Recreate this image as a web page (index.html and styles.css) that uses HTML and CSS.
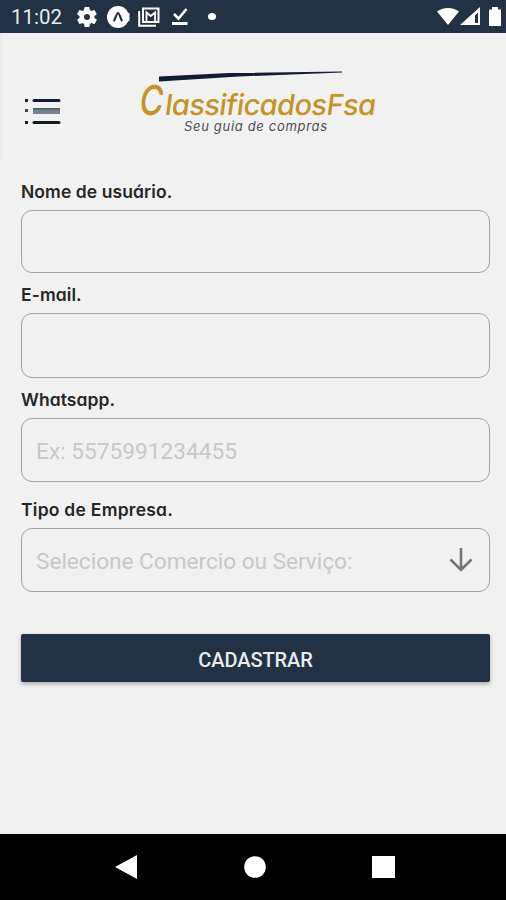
FILE: index.html
```html
<!DOCTYPE html>
<html lang="pt-BR">
<head>
    <meta charset="UTF-8">
    <meta name="viewport" content="width=device-width, initial-scale=1.0">
    <title>ClassificadosFsa</title>
    <link rel="stylesheet" href="styles.css">
</head>
<body>
<div class="status-bar">
    <span class="clock">11:02</span>
    <svg class="gear" width="20" height="20" viewBox="2 2 20 20"><path fill="#fff" d="M19.4 13a7.5 7.5 0 0 0 0-2l2.1-1.6c.2-.2.3-.4.1-.7l-2-3.4c-.1-.2-.4-.3-.6-.2l-2.5 1a7.3 7.3 0 0 0-1.7-1l-.4-2.6c0-.3-.2-.5-.5-.5h-4c-.2 0-.4.2-.5.5L9 5.100a7.300 7.300 0 0 0-1.700 1l-2.500-1c-.2-.1-.5 0-.6.2l-2 3.400c-.1.3-.1.5.1.7L4.500 11a7.500 7.500 0 0 0 0 2l-2.100 1.600c-.2.200-.3.400-.1.700l2 3.400c.1.200.4.300.6.200l2.500-1c.5.400 1.100.8 1.700 1l.4 2.600c0 .3.2.5.5.5h4c.2 0 .5-.2.5-.5l.4-2.600c.6-.2 1.200-.6 1.700-1l2.500 1c.2.1.5 0 .6-.2l2-3.400c.1-.3.1-.5-.1-.7zM12 15a3 3 0 1 1 0-6 3 3 0 0 1 0 6z"/></svg>
    <svg class="expo" width="24" height="24" viewBox="0 0 24 24"><circle cx="12" cy="12" r="11" fill="#fff"/><path fill="#fff" d="M20 8h3.500v8H20z"/><path d="M7.800 16.200C9.500 14 10.500 8 12 8s2.500 6 4.200 8.200" fill="none" stroke="#223144" stroke-width="2.200"/></svg>
    <svg class="mail" width="22" height="20" viewBox="0 0 22 20"><path d="M1.200 4v14.800H18" fill="none" stroke="#fff" stroke-width="2"/><rect x="5" y="1.500" width="15.500" height="13.500" fill="none" stroke="#fff" stroke-width="2"/><path d="M8.500 15V5.500l4.300 3.600 4.300-3.600V15" fill="none" stroke="#fff" stroke-width="1.900"/></svg>
    <svg class="check" width="18" height="20" viewBox="0 0 18 20"><path d="M3 7l4.500 4.500L15.500 2" fill="none" stroke="#fff" stroke-width="2.600"/><path fill="#fff" d="M1 15h15.500v3H1z"/></svg>
    <span class="dot"></span>
    <svg class="signals" width="66" height="22" viewBox="0 0 66 22"><path fill="#fff" d="M0 5.500C6 .8 16 .8 22 5.500L11 19z"/><path fill="#fff" fill-rule="evenodd" d="M43 1v18H23zM38 9.500V17h3V6.500z"/><path fill="#fff" d="M52 3.500h3V1h6v2.500h3V20H52z"/></svg>
</div>

<div class="header">
    <svg class="menu" width="38" height="30" viewBox="0 0 38 30">
        <path d="M1 4.500h3M1 26.500h3" stroke="#222" stroke-width="3"/>
        <path d="M1 14.500h3" stroke="#444" stroke-width="3"/>
        <path d="M10 4.500h25" stroke="#121a3b" stroke-width="3" stroke-linecap="round"/>
        <path d="M9 13h27v5H9z" fill="#75828f"/>
        <path d="M9 12.800h27" stroke="#4d5966" stroke-width="1.500"/>
        <path d="M10 26.500h25" stroke="#151a1a" stroke-width="3" stroke-linecap="round"/>
    </svg>
    <svg class="logo" width="240" height="70" viewBox="0 0 240 70">
        <path d="M20 8.500L90 5l113-1.500v1L100 8.500l-80 5z" fill="#101c31"/>
        <text class="brand" transform="translate(0 47) skewX(-8)"><tspan class="brand-cap" x="-1" y="0" textLength="24" lengthAdjust="spacingAndGlyphs">C</tspan><tspan x="25" y="0" textLength="211" lengthAdjust="spacing">lassificadosFsa</tspan></text>
        <text class="tagline" x="45" y="63" textLength="143" lengthAdjust="spacing">Seu guia de compras</text>
    </svg>
</div>

<form class="form">
    <label class="label" for="nome">Nome de usuário.</label>
    <input class="field" type="text" id="nome">
    <label class="label label-email" for="email">E-mail.</label>
    <input class="field field-email" type="text" id="email">
    <label class="label label-whats" for="whats">Whatsapp.</label>
    <input class="field field-whats" type="text" id="whats" placeholder="Ex: 5575991234455">
    <label class="label label-tipo">Tipo de Empresa.</label>
    <div class="field select">
        <span>Selecione Comercio ou Serviço:</span>
        <svg width="26" height="26" viewBox="0 0 26 26"><path d="M13 1v22M2.500 12.500L13 23l10.500-10.500" fill="none" stroke="#757575" stroke-width="2.600"/></svg>
    </div>
    <button class="submit" type="button">CADASTRAR</button>
</form>

<div class="nav-bar">
    <svg width="24" height="24" viewBox="0 0 24 24"><path fill="#fff" d="M1 12L23 0v24z"/></svg>
    <svg width="22" height="22" viewBox="0 0 22 22"><circle cx="11" cy="11" r="10.800" fill="#fff"/></svg>
    <svg width="23" height="22" viewBox="0 0 23 22"><path fill="#fff" d="M0 0h23v22H0z"/></svg>
</div>
</body>
</html>
```
FILE: styles.css
```css
* {
    box-sizing: border-box;
}
body {
    margin: 0;
    height: 900px;
    display: flex;
    flex-direction: column;
    background-color: #f1f1f1;
    font-family: Roboto, sans-serif;
    overflow: hidden;
}
svg {
    display: block;
    flex: none;
}
.status-bar {
    height: 33px;
    display: flex;
    align-items: center;
    padding-left: 11px;
    background-color: #223144;
    color: #e8ebee;
}
.clock {
    width: 66px;
    font-size: 20.5px;
    line-height: 33px;
    padding-top: 2px;
}
.expo {
    margin-left: 9px;
}
.mail {
    margin-left: 8px;
}
.check {
    margin-left: 11px;
}
.dot {
    width: 8px;
    height: 7px;
    margin-left: 19px;
    border-radius: 50%;
    background-color: #fff;
}
.signals {
    margin-left: auto;
    margin-right: 3px;
}
.header {
    height: 127px;
    display: flex;
    align-items: flex-start;
    border-left: 2px solid #ebebee;
}
.menu {
    margin: 63px 0 0 22px;
}
.logo {
    margin: 35px 0 0 77px;
    overflow: visible;
}
.brand {
    font-family: Inter, sans-serif;
    font-feature-settings: "cv11";
    font-size: 29px;
    font-weight: 500;
    fill: #c4942a;
}
.brand-cap {
    font-size: 41px;
    font-weight: 500;
}
.tagline {
    font-family: Inter, sans-serif;
    font-feature-settings: "cv11";
    font-size: 13px;
    font-style: italic;
    fill: #4b4e54;
}
.form {
    flex: 1;
    display: flex;
    flex-direction: column;
    padding: 21px 16px 0 21px;
}
.label {
    height: 20px;
    margin-bottom: 9px;
    padding-top: 1px;
    font-family: Inter, sans-serif;
    font-feature-settings: "cv11";
    font-size: 17.5px;
    font-weight: 600;
    line-height: 20px;
    letter-spacing: 0.08px;
    color: #262626;
}
.label-email {
    margin-top: 11px;
}
.label-whats {
    margin-top: 11px;
}
.label-tipo {
    margin-top: 17px;
    letter-spacing: 0.25px;
}
.field {
    flex: none;
    width: 100%;
    height: 63px;
    padding: 0 14px;
    border: 1.5px solid #a3a3a3;
    border-radius: 11px;
    background-color: transparent;
    font-family: Roboto, sans-serif;
    font-size: 22.7px;
    color: #333;
}
.field-email {
    height: 65px;
}
.field-whats {
    height: 64px;
    padding-top: 3px;
}
.field::placeholder {
    color: #c8c8ca;
    opacity: 1;
}
.select {
    height: 64px;
    display: flex;
    align-items: center;
    justify-content: space-between;
    padding-right: 15px;
    color: #c8c8ca;
}
.select span {
    padding-top: 3px;
    letter-spacing: -0.05px;
}
.submit {
    flex: none;
    height: 48px;
    margin-top: 42px;
    padding-top: 4px;
    border: none;
    border-radius: 2px;
    background-color: #223144;
    box-shadow: 0 2px 4px rgba(0, 0, 0, 0.3);
    font-family: Roboto, sans-serif;
    font-size: 20px;
    font-weight: 500;
    letter-spacing: -0.1px;
    color: #e9ecef;
}
.nav-bar {
    height: 66px;
    display: flex;
    align-items: center;
    justify-content: space-between;
    padding: 0 111px 0 114px;
    background-color: #000;
}
```
